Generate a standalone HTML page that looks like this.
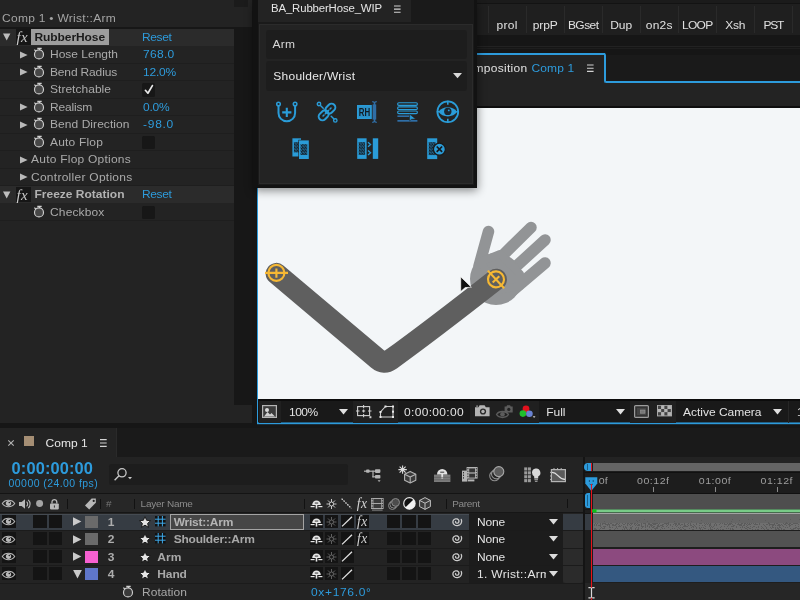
<!DOCTYPE html>
<html>
<head>
<meta charset="utf-8">
<title>After Effects - RubberHose</title>
<style>
*{box-sizing:border-box;margin:0;padding:0}
html,body{width:800px;height:600px;overflow:hidden;background:#161616;font-family:"Liberation Sans",sans-serif;font-size:12px;color:#a9a9a9}
.a{position:absolute}
.t{position:absolute;white-space:pre}
svg{position:absolute;overflow:visible}
#root{position:absolute;left:0;top:0;width:800px;height:600px;overflow:hidden;will-change:transform}
</style>
</head>
<body>
<div id="root">
<!-- ============ EFFECT CONTROLS ============ -->
<div class="a" style="left:0px;top:0px;width:252px;height:423px;background:#232323;"></div>
<div class="a" style="left:234px;top:0px;width:14px;height:7px;background:#1b1b1b;"></div>
<div class="t" style="left:2px;top:11.34px;font-size:12px;line-height:14px;height:14px;color:#a4a4a4;letter-spacing:0.281px;transform:scaleY(0.925);transform-origin:0 11.16px;">Comp 1 • Wrist::Arm</div>
<div class="a" style="left:0px;top:27px;width:252px;height:2px;background:#171717;"></div>
<div class="a" style="left:234px;top:29px;width:18px;height:376px;background:#171717;"></div>
<div class="a" style="left:0px;top:28.75px;width:234px;height:17px;background:#2b2b2b;"></div>
<svg style="left:3px;top:33.35px;" width="8" height="8" viewBox="0 0 8 8"><path d="M0 0.4h7.4L3.7 7.4z" fill="#bdbdbd"/></svg>
<div class="a" style="left:16px;top:29.25px;width:14.5px;height:15.5px;background:#161616;"></div>
<div class="t" style="left:16.5px;top:28.25px;font-size:15px;line-height:18px;height:18px;color:#c8c8c8;font-family:'Liberation Serif',serif;font-style:italic;letter-spacing:0.3px;">fx</div>
<div class="a" style="left:31px;top:29.15px;width:78px;height:15.6px;background:#9d9d9d;"></div>
<div class="t" style="left:34.5px;top:29.69px;font-size:12px;line-height:14px;height:14px;color:#1b1b1b;font-weight:700;letter-spacing:-0.084px;transform:scaleY(0.925);transform-origin:0 11.16px;">RubberHose</div>
<div class="t" style="left:142px;top:29.69px;font-size:12px;line-height:14px;height:14px;color:#2e9bdb;letter-spacing:-0.369px;transform:scaleY(0.925);transform-origin:0 11.16px;">Reset</div>
<div class="a" style="left:0px;top:62.85px;width:234px;height:1px;background:#1e1e1e;"></div>
<svg style="left:20px;top:50.85px;" width="8" height="8" viewBox="0 0 8 8"><path d="M0 0.6L7.6 4L0 7.4z" fill="#b9b9b9"/></svg>
<svg style="left:32.1px;top:46.45px;" width="14" height="16" viewBox="0 0 14 16"><circle cx="7" cy="8.4" r="4.5" fill="#484848" stroke="#cfcfcf" stroke-width="1.15"/><path d="M5.3 2.3h4.4M7.5 2.3v1.6M2.4 3.6l1.4 1.4" stroke="#cfcfcf" stroke-width="1.2" fill="none"/></svg>
<div class="t" style="left:50px;top:47.19px;font-size:12px;line-height:14px;height:14px;color:#aaaaaa;letter-spacing:-0.004px;transform:scaleY(0.925);transform-origin:0 11.16px;">Hose Length</div>
<div class="t" style="left:143px;top:47.19px;font-size:12px;line-height:14px;height:14px;color:#2e9bdb;letter-spacing:0.295px;transform:scaleY(0.925);transform-origin:0 11.16px;">768.0</div>
<div class="a" style="left:0px;top:80.35px;width:234px;height:1px;background:#1e1e1e;"></div>
<svg style="left:20px;top:68.35px;" width="8" height="8" viewBox="0 0 8 8"><path d="M0 0.6L7.6 4L0 7.4z" fill="#b9b9b9"/></svg>
<svg style="left:32.1px;top:63.94999999999999px;" width="14" height="16" viewBox="0 0 14 16"><circle cx="7" cy="8.4" r="4.5" fill="#484848" stroke="#cfcfcf" stroke-width="1.15"/><path d="M5.3 2.3h4.4M7.5 2.3v1.6M2.4 3.6l1.4 1.4" stroke="#cfcfcf" stroke-width="1.2" fill="none"/></svg>
<div class="t" style="left:50px;top:64.69px;font-size:12px;line-height:14px;height:14px;color:#aaaaaa;letter-spacing:-0.155px;transform:scaleY(0.925);transform-origin:0 11.16px;">Bend Radius</div>
<div class="t" style="left:143px;top:64.69px;font-size:12px;line-height:14px;height:14px;color:#2e9bdb;letter-spacing:-0.205px;transform:scaleY(0.925);transform-origin:0 11.16px;">12.0%</div>
<div class="a" style="left:0px;top:97.85px;width:234px;height:1px;background:#1e1e1e;"></div>
<svg style="left:32.1px;top:81.44999999999999px;" width="14" height="16" viewBox="0 0 14 16"><circle cx="7" cy="8.4" r="4.5" fill="#484848" stroke="#cfcfcf" stroke-width="1.15"/><path d="M5.3 2.3h4.4M7.5 2.3v1.6M2.4 3.6l1.4 1.4" stroke="#cfcfcf" stroke-width="1.2" fill="none"/></svg>
<div class="t" style="left:50px;top:82.19px;font-size:12px;line-height:14px;height:14px;color:#aaaaaa;letter-spacing:0.027px;transform:scaleY(0.925);transform-origin:0 11.16px;">Stretchable</div>
<div class="a" style="left:141.5px;top:83.25px;width:13.5px;height:13.5px;background:#171717;border-radius:1.5px"></div>
<svg style="left:141.5px;top:83.25px;" width="13.5" height="13.5" viewBox="0 0 13.5 13.5"><path d="M3.4 7.3L5.9 10.2L10.4 2.6" stroke="#e8e8e8" stroke-width="1.7" fill="none" stroke-linecap="round" stroke-linejoin="round"/></svg>
<div class="a" style="left:0px;top:115.35px;width:234px;height:1px;background:#1e1e1e;"></div>
<svg style="left:20px;top:103.35px;" width="8" height="8" viewBox="0 0 8 8"><path d="M0 0.6L7.6 4L0 7.4z" fill="#b9b9b9"/></svg>
<svg style="left:32.1px;top:98.94999999999999px;" width="14" height="16" viewBox="0 0 14 16"><circle cx="7" cy="8.4" r="4.5" fill="#484848" stroke="#cfcfcf" stroke-width="1.15"/><path d="M5.3 2.3h4.4M7.5 2.3v1.6M2.4 3.6l1.4 1.4" stroke="#cfcfcf" stroke-width="1.2" fill="none"/></svg>
<div class="t" style="left:50px;top:99.69px;font-size:12px;line-height:14px;height:14px;color:#aaaaaa;letter-spacing:-0.192px;transform:scaleY(0.925);transform-origin:0 11.16px;">Realism</div>
<div class="t" style="left:143px;top:99.69px;font-size:12px;line-height:14px;height:14px;color:#2e9bdb;letter-spacing:-0.213px;transform:scaleY(0.925);transform-origin:0 11.16px;">0.0%</div>
<div class="a" style="left:0px;top:132.85px;width:234px;height:1px;background:#1e1e1e;"></div>
<svg style="left:20px;top:120.85px;" width="8" height="8" viewBox="0 0 8 8"><path d="M0 0.6L7.6 4L0 7.4z" fill="#b9b9b9"/></svg>
<svg style="left:32.1px;top:116.44999999999999px;" width="14" height="16" viewBox="0 0 14 16"><circle cx="7" cy="8.4" r="4.5" fill="#484848" stroke="#cfcfcf" stroke-width="1.15"/><path d="M5.3 2.3h4.4M7.5 2.3v1.6M2.4 3.6l1.4 1.4" stroke="#cfcfcf" stroke-width="1.2" fill="none"/></svg>
<div class="t" style="left:50px;top:117.19px;font-size:12px;line-height:14px;height:14px;color:#aaaaaa;letter-spacing:0.057px;transform:scaleY(0.925);transform-origin:0 11.16px;">Bend Direction</div>
<div class="t" style="left:143px;top:117.19px;font-size:12px;line-height:14px;height:14px;color:#2e9bdb;letter-spacing:0.730px;transform:scaleY(0.925);transform-origin:0 11.16px;">-98.0</div>
<div class="a" style="left:0px;top:150.35px;width:234px;height:1px;background:#1e1e1e;"></div>
<svg style="left:32.1px;top:133.95px;" width="14" height="16" viewBox="0 0 14 16"><circle cx="7" cy="8.4" r="4.5" fill="#484848" stroke="#cfcfcf" stroke-width="1.15"/><path d="M5.3 2.3h4.4M7.5 2.3v1.6M2.4 3.6l1.4 1.4" stroke="#cfcfcf" stroke-width="1.2" fill="none"/></svg>
<div class="t" style="left:50px;top:134.69px;font-size:12px;line-height:14px;height:14px;color:#aaaaaa;letter-spacing:0.182px;transform:scaleY(0.925);transform-origin:0 11.16px;">Auto Flop</div>
<div class="a" style="left:141.5px;top:135.75px;width:13.5px;height:13.5px;background:#171717;border-radius:1.5px"></div>
<div class="a" style="left:0px;top:167.85px;width:234px;height:1px;background:#1e1e1e;"></div>
<svg style="left:20px;top:155.85px;" width="8" height="8" viewBox="0 0 8 8"><path d="M0 0.6L7.6 4L0 7.4z" fill="#b9b9b9"/></svg>
<div class="t" style="left:31px;top:152.19px;font-size:12px;line-height:14px;height:14px;color:#aaaaaa;letter-spacing:0.233px;transform:scaleY(0.925);transform-origin:0 11.16px;">Auto Flop Options</div>
<div class="a" style="left:0px;top:185.35px;width:234px;height:1px;background:#1e1e1e;"></div>
<svg style="left:20px;top:173.35px;" width="8" height="8" viewBox="0 0 8 8"><path d="M0 0.6L7.6 4L0 7.4z" fill="#b9b9b9"/></svg>
<div class="t" style="left:31px;top:169.69px;font-size:12px;line-height:14px;height:14px;color:#aaaaaa;letter-spacing:0.266px;transform:scaleY(0.925);transform-origin:0 11.16px;">Controller Options</div>
<div class="a" style="left:0px;top:186.25px;width:234px;height:17px;background:#2b2b2b;"></div>
<svg style="left:3px;top:190.85px;" width="8" height="8" viewBox="0 0 8 8"><path d="M0 0.4h7.4L3.7 7.4z" fill="#bdbdbd"/></svg>
<div class="a" style="left:16px;top:186.75px;width:14.5px;height:15.5px;background:#161616;"></div>
<div class="t" style="left:16.5px;top:185.75px;font-size:15px;line-height:18px;height:18px;color:#c8c8c8;font-family:'Liberation Serif',serif;font-style:italic;letter-spacing:0.3px;">fx</div>
<div class="t" style="left:34.5px;top:187.19px;font-size:12px;line-height:14px;height:14px;color:#b2b2b2;font-weight:700;letter-spacing:-0.000px;transform:scaleY(0.925);transform-origin:0 11.16px;">Freeze Rotation</div>
<div class="t" style="left:142px;top:187.19px;font-size:12px;line-height:14px;height:14px;color:#2e9bdb;letter-spacing:-0.369px;transform:scaleY(0.925);transform-origin:0 11.16px;">Reset</div>
<div class="a" style="left:0px;top:220.35px;width:234px;height:1px;background:#1e1e1e;"></div>
<svg style="left:32.1px;top:203.95px;" width="14" height="16" viewBox="0 0 14 16"><circle cx="7" cy="8.4" r="4.5" fill="#484848" stroke="#cfcfcf" stroke-width="1.15"/><path d="M5.3 2.3h4.4M7.5 2.3v1.6M2.4 3.6l1.4 1.4" stroke="#cfcfcf" stroke-width="1.2" fill="none"/></svg>
<div class="t" style="left:50px;top:204.69px;font-size:12px;line-height:14px;height:14px;color:#aaaaaa;letter-spacing:0.143px;transform:scaleY(0.925);transform-origin:0 11.16px;">Checkbox</div>
<div class="a" style="left:141.5px;top:205.75px;width:13.5px;height:13.5px;background:#171717;border-radius:1.5px"></div>
<!-- ============ VIEWER ============ -->
<div class="a" style="left:477px;top:55px;width:323px;height:52px;background:#232323;"></div>
<div class="a" style="left:477px;top:106px;width:323px;height:2px;background:#0e0e0e;"></div>
<div class="a" style="left:258px;top:108px;width:542px;height:291px;background:#f3f6f8;"></div>
<div class="a" style="left:257px;top:187.5px;width:1px;height:236px;background:#2d9bdc;"></div>
<svg style="left:0;top:0" width="800" height="600" viewBox="0 0 800 600"><g fill="none" stroke-linecap="round" stroke-linejoin="round"><g stroke="#929496" stroke-width="11.5"><path d="M488.5 231.5L479 266"/><path d="M531 227.5L502 256"/><path d="M545 240L510 272"/><path d="M545 263L512 291"/></g><circle cx="496" cy="279" r="26" fill="#929496"/><path d="M480 262 L500 254 L520 274 L520 286 L500 290 Z" fill="#929496" stroke="#929496" stroke-width="8"/><path d="M276.4 273.6L377.9 359.3Q384 364.5 390.5 359.8Q431 330.6 496.2 279.4" stroke="#5f5f5f" stroke-width="21.5"/></g><g fill="none" stroke="#f6b834" stroke-width="2.15"><circle cx="276.4" cy="272.9" r="8"/><path d="M265 272.9h23M276.4 268.6v9.2" /><g transform="rotate(47 496 279.4)"><circle cx="496" cy="279.4" r="8"/><path d="M484 279.4h24M496 274.9v9"/></g></g><path d="M460.7 276.8L460.7 291.6L465.2 287.6L471.4 287.2Z" fill="#111" stroke="#fff" stroke-width="0.7" stroke-linejoin="round"/></svg>
<div class="a" style="left:258.5px;top:399px;width:541.5px;height:23.5px;background:#191919;"></div>
<div class="a" style="left:258.5px;top:399px;width:541.5px;height:1.5px;background:#0c0c0c;"></div>
<svg style="left:257px;top:422px;" width="543" height="3" viewBox="0 0 543 3"><rect x="0" y="0.45" width="543" height="1.75" fill="#2d9bdc"/></svg>
<div class="a" style="left:258.5px;top:401px;width:22.5px;height:21.5px;background:#202020;"></div>
<div class="a" style="left:353px;top:401px;width:45px;height:21.5px;background:#202020;"></div>
<div class="a" style="left:470px;top:401px;width:69px;height:21.5px;background:#202020;"></div>
<div class="a" style="left:630px;top:401px;width:46px;height:21.5px;background:#202020;"></div>
<div class="a" style="left:788px;top:401px;width:1px;height:21.5px;background:#262626;"></div>
<svg style="left:262px;top:405px;" width="15" height="13" viewBox="0 0 15 13"><rect x="0.6" y="0.6" width="13.8" height="11.8" fill="#3b3b3b" stroke="#b5b5b5" stroke-width="1.2"/><circle cx="5" cy="5" r="2" fill="#d8d8d8"/><path d="M2 11.5L5.5 7L8 9.5L9.5 8L13 11.5z" fill="#cfcfcf"/></svg>
<div class="t" style="left:289px;top:405.24px;font-size:12px;line-height:14px;height:14px;color:#e2e2e2;letter-spacing:-0.548px;transform:scaleY(0.925);transform-origin:0 11.16px;">100%</div>
<svg style="left:338.5px;top:409.3px;" width="9" height="5.5" viewBox="0 0 9 5.5"><path d="M0 0h9L4.5 5.5z" fill="#e0e0e0"/></svg>
<svg style="left:356px;top:405px;" width="17" height="14" viewBox="0 0 17 14"><g fill="none" stroke="#d0d0d0" stroke-width="1.1"><rect x="1.6" y="1.6" width="12" height="9"/><path d="M0 6h3.5M12 6h3.5M7.6 0v3.3M7.6 9v3.3M6 6h3.2M7.6 4.6v2.8"/></g><rect x="13.4" y="11.2" width="2" height="2" fill="#d0d0d0"/></svg>
<svg style="left:379px;top:404.5px;" width="16" height="14" viewBox="0 0 16 14"><g fill="none" stroke="#d0d0d0" stroke-width="1.1"><path d="M1.5 12L1.5 7L6.5 1.5L14 1.5L14 12Z"/></g><g fill="#e8e8e8"><rect x="0.5" y="11" width="2" height="2"/><rect x="0.5" y="6" width="2" height="2"/><rect x="5.5" y="0.5" width="2" height="2"/><rect x="13" y="0.5" width="2" height="2"/><rect x="13" y="11" width="2" height="2"/><rect x="13" y="5.7" width="2" height="2"/></g></svg>
<div class="t" style="left:404px;top:405.24px;font-size:12px;line-height:14px;height:14px;color:#e2e2e2;letter-spacing:0.329px;transform:scaleY(0.925);transform-origin:0 11.16px;">0:00:00:00</div>
<svg style="left:474.5px;top:405.3px;" width="15" height="11.5" viewBox="0 0 15 11.5"><path d="M0 2.2h3.4l1.2-2h5l1.2 2H14.6v9H0z" fill="#b4b4b4"/><circle cx="8" cy="6.5" r="3.1" fill="#2a2a2a"/><circle cx="8" cy="6.5" r="1.7" fill="#b4b4b4"/><rect x="1.2" y="0.6" width="1.8" height="1" fill="#b4b4b4"/></svg>
<svg style="left:496px;top:403.5px;" width="18" height="16" viewBox="0 0 18 16"><path d="M0.5 10.5C3 6.5 10 6.5 12.5 10.5C10 14.5 3 14.5 0.5 10.5z" fill="none" stroke="#5c5c5c" stroke-width="1.3"/><circle cx="6.5" cy="10.3" r="2.3" fill="#5c5c5c"/><path d="M8.6 2.5h1.8l.7-1.2h3l.7 1.2h1.9v6h-8.1z" fill="#5c5c5c"/><circle cx="12.8" cy="5.4" r="1.6" fill="#222"/></svg>
<svg style="left:518px;top:404px;" width="20" height="16" viewBox="0 0 20 16"><circle cx="8" cy="4.8" r="3.4" fill="#e3111d"/><circle cx="4.9" cy="9.6" r="3.3" fill="#20bf2c"/><circle cx="11.4" cy="9.7" r="3.3" fill="#6a83d2"/><path d="M14.7 12.3h2.8l-1.4 1.7z" fill="#d0d0d0"/></svg>
<div class="t" style="left:546.3px;top:405.24px;font-size:12px;line-height:14px;height:14px;color:#e2e2e2;letter-spacing:-0.084px;transform:scaleY(0.925);transform-origin:0 11.16px;">Full</div>
<svg style="left:616px;top:409.3px;" width="9" height="5.5" viewBox="0 0 9 5.5"><path d="M0 0h9L4.5 5.5z" fill="#e0e0e0"/></svg>
<svg style="left:634px;top:405px;" width="15" height="13" viewBox="0 0 15 13"><rect x="0.6" y="0.6" width="13.8" height="11.8" rx="1" fill="#333" stroke="#9c9c9c" stroke-width="1.2"/><rect x="3" y="3" width="9" height="7" fill="#444"/><rect x="6.5" y="5" width="4.5" height="3.2" fill="#777" stroke="#999" stroke-width="0.6"/></svg>
<svg style="left:657px;top:405px;" width="15" height="11.5" viewBox="0 0 15 11.5"><rect x="0" y="0" width="15" height="11.4" fill="#a8a8a8"/><rect x="1.0" y="0.8" width="3.2" height="3.2" fill="#444"/><rect x="1.0" y="4.0" width="3.2" height="3.2" fill="#b5b5b5"/><rect x="1.0" y="7.2" width="3.2" height="3.2" fill="#444"/><rect x="4.2" y="0.8" width="3.2" height="3.2" fill="#b5b5b5"/><rect x="4.2" y="4.0" width="3.2" height="3.2" fill="#444"/><rect x="4.2" y="7.2" width="3.2" height="3.2" fill="#b5b5b5"/><rect x="7.4" y="0.8" width="3.2" height="3.2" fill="#444"/><rect x="7.4" y="4.0" width="3.2" height="3.2" fill="#b5b5b5"/><rect x="7.4" y="7.2" width="3.2" height="3.2" fill="#444"/><rect x="10.6" y="0.8" width="3.2" height="3.2" fill="#b5b5b5"/><rect x="10.6" y="4.0" width="3.2" height="3.2" fill="#444"/><rect x="10.6" y="7.2" width="3.2" height="3.2" fill="#b5b5b5"/></svg>
<div class="t" style="left:683px;top:405.24px;font-size:12px;line-height:14px;height:14px;color:#e2e2e2;letter-spacing:-0.014px;transform:scaleY(0.925);transform-origin:0 11.16px;">Active Camera</div>
<svg style="left:773px;top:409.3px;" width="9" height="5.5" viewBox="0 0 9 5.5"><path d="M0 0h9L4.5 5.5z" fill="#e0e0e0"/></svg>
<div class="t" style="left:797px;top:405.24px;font-size:12px;line-height:14px;height:14px;color:#e2e2e2;transform:scaleY(0.925);transform-origin:0 11.16px;">1</div>
<!-- ============ TOP RIGHT ============ -->
<div class="a" style="left:477px;top:0px;width:323px;height:4px;background:#1b1b1b;"></div>
<div class="a" style="left:477px;top:3px;width:323px;height:1px;background:#131313;"></div>
<div class="a" style="left:477px;top:4px;width:323px;height:30.5px;background:#1f1f1f;"></div>
<div class="a" style="left:487.5px;top:6px;width:1px;height:27px;background:#2a2a2a;"></div>
<div class="t" style="left:496.55px;top:17.64px;font-size:12px;line-height:14px;height:14px;color:#e0e0e0;letter-spacing:0.323px;transform:scaleY(0.925);transform-origin:0 11.16px;">prol</div>
<div class="a" style="left:525.5px;top:6px;width:1px;height:27px;background:#2a2a2a;"></div>
<div class="t" style="left:532.7px;top:17.64px;font-size:12px;line-height:14px;height:14px;color:#e0e0e0;letter-spacing:-0.087px;transform:scaleY(0.925);transform-origin:0 11.16px;">prpP</div>
<div class="a" style="left:563.5px;top:6px;width:1px;height:27px;background:#2a2a2a;"></div>
<div class="t" style="left:567.9000000000001px;top:17.64px;font-size:12px;line-height:14px;height:14px;color:#e0e0e0;letter-spacing:-0.549px;transform:scaleY(0.925);transform-origin:0 11.16px;">BGset</div>
<div class="a" style="left:601.5px;top:6px;width:1px;height:27px;background:#2a2a2a;"></div>
<div class="t" style="left:610.2px;top:17.64px;font-size:12px;line-height:14px;height:14px;color:#e0e0e0;letter-spacing:-0.004px;transform:scaleY(0.925);transform-origin:0 11.16px;">Dup</div>
<div class="a" style="left:639.5px;top:6px;width:1px;height:27px;background:#2a2a2a;"></div>
<div class="t" style="left:645.8000000000001px;top:17.64px;font-size:12px;line-height:14px;height:14px;color:#e0e0e0;letter-spacing:0.195px;transform:scaleY(0.925);transform-origin:0 11.16px;">on2s</div>
<div class="a" style="left:677.5px;top:6px;width:1px;height:27px;background:#2a2a2a;"></div>
<div class="t" style="left:681.95px;top:17.64px;font-size:12px;line-height:14px;height:14px;color:#e0e0e0;letter-spacing:-0.711px;transform:scaleY(0.925);transform-origin:0 11.16px;">LOOP</div>
<div class="a" style="left:715.5px;top:6px;width:1px;height:27px;background:#2a2a2a;"></div>
<div class="t" style="left:725.2px;top:17.64px;font-size:12px;line-height:14px;height:14px;color:#e0e0e0;letter-spacing:-0.226px;transform:scaleY(0.925);transform-origin:0 11.16px;">Xsh</div>
<div class="a" style="left:753.5px;top:6px;width:1px;height:27px;background:#2a2a2a;"></div>
<div class="t" style="left:763.4000000000001px;top:17.64px;font-size:12px;line-height:14px;height:14px;color:#e0e0e0;letter-spacing:-1.246px;transform:scaleY(0.925);transform-origin:0 11.16px;">PST</div>
<div class="a" style="left:791.5px;top:6px;width:1px;height:27px;background:#2a2a2a;"></div>
<div class="a" style="left:477px;top:34.5px;width:323px;height:18.5px;background:#161616;"></div>
<div class="a" style="left:477px;top:46px;width:323px;height:1px;background:#222;"></div>
<div class="a" style="left:477px;top:48px;width:323px;height:1px;background:#1e1e1e;"></div>
<div class="a" style="left:477px;top:53px;width:128px;height:2px;background:#2d9bdc;"></div>
<div class="a" style="left:605.5px;top:55px;width:194.5px;height:26px;background:#1a1a1a;"></div>
<div class="a" style="left:598px;top:53px;width:7.5px;height:8px;border-top:2px solid #2d9bdc;border-right:2px solid #2d9bdc;border-top-right-radius:2.5px"></div>
<div class="a" style="left:603.5px;top:60px;width:2px;height:21px;background:#2d9bdc;"></div>
<div class="a" style="left:603.5px;top:76px;width:8px;height:6.5px;border-bottom:2px solid #2d9bdc;border-left:2px solid #2d9bdc;border-bottom-left-radius:2.5px"></div>
<div class="a" style="left:610px;top:80.5px;width:190px;height:2px;background:#2d9bdc;"></div>
<div class="t" style="left:473.6px;top:61.24px;font-size:12px;line-height:14px;height:14px;color:#e0e0e0;letter-spacing:0.272px;transform:scaleY(0.925);transform-origin:0 11.16px;">mposition</div>
<div class="t" style="left:531.4px;top:61.24px;font-size:12px;line-height:14px;height:14px;color:#2d9bdc;letter-spacing:0.164px;transform:scaleY(0.925);transform-origin:0 11.16px;">Comp 1</div>
<svg style="left:587px;top:64.3px;" width="7" height="9" viewBox="0 0 7 9"><path d="M0 1h6.6M0 4.2h6.6M0 7.4h6.6" stroke="#d2d2d2" stroke-width="1.1"/></svg>
<!-- ============ BA PANEL ============ -->
<div class="a" style="left:253px;top:0px;width:223.5px;height:187px;background:#121212;box-shadow:0 3px 9px 0.5px rgba(0,0,0,0.46)"></div>
<div class="a" style="left:474px;top:0px;width:3.2px;height:187.5px;background:#121212;"></div>
<div class="a" style="left:258px;top:185px;width:219px;height:2.5px;background:#121212;"></div>
<div class="a" style="left:258px;top:0px;width:216px;height:24px;background:#1a1a1a;"></div>
<div class="a" style="left:258px;top:0px;width:152.5px;height:22px;background:#232323;"></div>
<div class="t" style="left:271px;top:1.05px;font-size:11.4px;line-height:14px;height:14px;color:#e4e4e4;letter-spacing:-0.142px;transform:scaleY(0.97);transform-origin:0 10.95px;">BA_RubberHose_WIP</div>
<svg style="left:394px;top:4.6px;" width="7" height="9" viewBox="0 0 7 9"><path d="M0 1h6.6M0 4.1h6.6M0 7.3h6.6" stroke="#d2d2d2" stroke-width="1.1"/></svg>
<div class="a" style="left:258px;top:22.5px;width:216px;height:162.5px;background:#232323;border:1px solid #1a1a1a;box-shadow:inset 0 0 0 1px #2b2b2b"></div>
<div class="a" style="left:266px;top:30px;width:201px;height:28.5px;background:#1d1d1d;border-radius:3px"></div>
<div class="a" style="left:266px;top:60.8px;width:201px;height:29.8px;background:#1d1d1d;border-radius:3px"></div>
<div class="t" style="left:272.5px;top:37.04px;font-size:12px;line-height:14px;height:14px;color:#d6d6d6;letter-spacing:0.235px;transform:scaleY(0.925);transform-origin:0 11.16px;">Arm</div>
<div class="t" style="left:273.3px;top:69.04px;font-size:12px;line-height:14px;height:14px;color:#e8e8e8;letter-spacing:0.252px;transform:scaleY(0.925);transform-origin:0 11.16px;">Shoulder/Wrist</div>
<svg style="left:453px;top:73px;" width="9" height="5.3" viewBox="0 0 9 5.3"><path d="M0 0h9L4.5 5.3z" fill="#d9d9d9"/></svg>
<svg style="left:276px;top:101px;" width="22" height="22" viewBox="0 0 22 22"><g fill="none" stroke="#2a9cd8" stroke-width="2"><path d="M2.5 4.8V12a8.3 8.3 0 0 0 16.6 0V4.8"/><circle cx="2.5" cy="3" r="1.8" fill="#232323" stroke-width="1.5"/><circle cx="19.1" cy="3" r="1.8" fill="#232323" stroke-width="1.5"/><path d="M6.2 11.4h9.2M10.8 6.8v9.2" stroke-width="2.1"/></g></svg>
<svg style="left:316px;top:101px;" width="22" height="22" viewBox="0 0 22 22"><g fill="none" stroke="#2a9cd8" stroke-width="2" stroke-linecap="round"><g transform="rotate(-45 11 11)"><rect x="0.8" y="7.2" width="11" height="7.6" rx="3.8"/><rect x="10.2" y="7.2" width="11" height="7.6" rx="3.8"/><path d="M5.4 11h11.4" stroke-dasharray="1.4 1.9" stroke-width="1.5"/></g><path d="M4.2 4.2l3 3M15.2 15.2l2.8 2.8" stroke-width="1.5"/><circle cx="3" cy="3" r="1.7" fill="#232323" stroke-width="1.4"/><circle cx="19.3" cy="19.4" r="1.7" fill="#232323" stroke-width="1.4"/></g></svg>
<svg style="left:357px;top:101px;" width="22" height="22" viewBox="0 0 22 22"><rect x="0" y="4" width="14.8" height="14" fill="#2a9cd8"/><rect x="1.5" y="5.5" width="11.8" height="11" fill="#2b8fc6"/><text x="7.4" y="15.4" font-family="Liberation Sans" font-weight="700" font-size="11.6" text-anchor="middle" fill="#121c24" textLength="11.4" lengthAdjust="spacingAndGlyphs">RH</text><path d="M15.2 0.6c1.4 0 2.1.5 2.1 1.4V20c0 .9-.7 1.4-2.1 1.4M19.8 0.6c-1.4 0-2.1.5-2.1 1.4V20c0 .9.7 1.4 2.1 1.4" fill="none" stroke="#2f6ea6" stroke-width="1.2"/><rect x="15.6" y="3.4" width="3.6" height="15.2" fill="#2f6ea6"/></svg>
<svg style="left:397px;top:102px;" width="22" height="21" viewBox="0 0 22 21"><g fill="none" stroke="#2a9cd8" stroke-width="1.1"><rect x="0.6" y="0.8" width="19.8" height="2.6" rx="1.3"/><rect x="0.6" y="4.9" width="19.8" height="2.6" rx="1.3"/><rect x="0.6" y="9" width="19.8" height="2.6" rx="1.3"/></g><rect x="0.4" y="13.4" width="12" height="1.6" fill="#2f6ea6"/><rect x="0.4" y="18" width="20" height="1.7" fill="#2f6ea6"/><path d="M12.6 12.2L12.6 19L14.6 17.2L18.6 17Z" fill="#2a9cd8" stroke="#232323" stroke-width="0.5"/></svg>
<svg style="left:436px;top:100px;" width="24" height="24" viewBox="0 0 24 24"><circle cx="11.8" cy="11.8" r="10.4" fill="none" stroke="#2a9cd8" stroke-width="1.8"/><path d="M11.8 0.8v4M11.8 18.8v4M0.8 11.8h2.6M20.2 11.8h2.6" stroke="#2a9cd8" stroke-width="1.6"/><path d="M2.6 11.8C6 5.6 17.6 5.6 21 11.8C17.6 18 6 18 2.6 11.8z" fill="#2a9cd8"/><circle cx="11.8" cy="11.4" r="3.7" fill="#1b2630"/><circle cx="12.8" cy="10.4" r="0.9" fill="#2a9cd8"/></svg>
<svg width="0" height="0" style="left:0;top:0"><defs><pattern id="hx" width="2.7" height="3.1" patternUnits="userSpaceOnUse"><rect width="2.7" height="3.1" fill="#2a8cc2"/><path d="M0 0L2.7 3.1M2.7 0L0 3.1" stroke="#14202a" stroke-width="0.95"/></pattern></defs></svg>
<svg style="left:291.6px;top:137.6px;" width="18" height="22" viewBox="0 0 18 22"><rect x="0.4" y="0.3" width="8.6" height="18.2" fill="#2a9cd8"/><rect x="1.9" y="4.1" width="5.6" height="10.399999999999999" fill="url(#hx)"/><rect x="6.4" y="1.8" width="10.6" height="19.6" fill="#232323"/><rect x="7" y="2.4" width="9.8" height="18.6" fill="#2a9cd8"/><rect x="8.5" y="6.199999999999999" width="6.800000000000001" height="10.8" fill="url(#hx)"/></svg>
<svg style="left:356.7px;top:137.6px;" width="23" height="22" viewBox="0 0 23 22"><rect x="0.2" y="0.3" width="9.4" height="20.6" fill="#2a9cd8"/><rect x="1.7" y="4.1" width="6.4" height="12.8" fill="url(#hx)"/><path d="M11 4.2l2.6 2.3l-2.6 2.3M11 12.4l2.6 2.3l-2.6 2.3" fill="none" stroke="#2a9cd8" stroke-width="1.3"/><rect x="15.8" y="0.3" width="5.4" height="20.6" fill="#2a9cd8"/></svg>
<svg style="left:426.6px;top:137.6px;" width="20" height="22" viewBox="0 0 20 22"><rect x="0.2" y="0.3" width="10" height="20.8" fill="#2a9cd8"/><rect x="1.7" y="4.1" width="7" height="13.0" fill="url(#hx)"/><circle cx="12.4" cy="11.2" r="6" fill="#2a9cd8" stroke="#1b1b1b" stroke-width="1.3"/><path d="M9.7 8.5l5.4 5.4M15.1 8.5l-5.4 5.4" stroke="#17191b" stroke-width="1.7"/></svg>
<!-- ============ TIMELINE ============ -->
<div class="a" style="left:0px;top:428px;width:800px;height:172px;background:#232323;"></div>
<div class="a" style="left:116.5px;top:428px;width:683.5px;height:29px;background:#1a1a1a;"></div>
<div class="a" style="left:116px;top:428px;width:1px;height:29px;background:#2a2a2a;"></div>
<svg style="left:8px;top:440px;" width="6" height="6" viewBox="0 0 6 6"><path d="M0.3 0.3L5.7 5.7M5.7 0.3L0.3 5.7" stroke="#b4b4b4" stroke-width="1.1"/></svg>
<div class="a" style="left:23.8px;top:436px;width:10.2px;height:10.2px;background:#a58e74;"></div>
<div class="t" style="left:45.6px;top:435.64px;font-size:12px;line-height:14px;height:14px;color:#e6e6e6;letter-spacing:-0.003px;transform:scaleY(0.925);transform-origin:0 11.16px;">Comp 1</div>
<svg style="left:99.8px;top:439.2px;" width="7" height="9" viewBox="0 0 7 9"><path d="M0 0.6h6.7M0 4h6.7M0 7.4h6.7" stroke="#d2d2d2" stroke-width="1.2"/></svg>
<div class="t" style="left:11.6px;top:458.22px;font-size:16.4px;line-height:20px;height:20px;color:#2d9bdc;font-weight:700;letter-spacing:0.128px;">0:00:00:00</div>
<div class="t" style="left:8.6px;top:477.16px;font-size:10.5px;line-height:13px;height:13px;color:#2d9bdc;letter-spacing:0.424px;transform:scaleY(0.97);transform-origin:0 10.14px;">00000 (24.00 fps)</div>
<div class="a" style="left:109px;top:464px;width:239px;height:21px;background:#1d1d1d;border-radius:2.5px"></div>
<svg style="left:113px;top:467px;" width="20" height="15" viewBox="0 0 20 15"><circle cx="9" cy="5.8" r="4.1" fill="none" stroke="#c8c8c8" stroke-width="1.3"/><path d="M6 8.8L1.6 13.2" stroke="#c8c8c8" stroke-width="1.4"/><path d="M15 10h4l-2 2.2z" fill="#c8c8c8"/></svg>
<svg style="left:364px;top:469px;" width="17" height="14" viewBox="0 0 17 14"><g fill="#b4b4b4"><rect x="0" y="1.6" width="7" height="1.2"/><rect x="2" y="0.4" width="3.6" height="3.4" rx="1"/><rect x="11" y="0.3" width="5.4" height="3.6" rx="0.8"/><rect x="11" y="6" width="5.4" height="3.6" rx="0.8"/><rect x="7" y="1.6" width="4" height="1.2"/><rect x="8.4" y="1.6" width="1.2" height="6.8"/><rect x="8.4" y="7.2" width="3" height="1.2"/><path d="M13.6 11.2h3l-1.5 1.8z"/></g></svg>
<svg style="left:398px;top:465px;" width="19" height="19" viewBox="0 0 19 19"><g stroke="#dcdcdc" stroke-width="1.1"><path d="M4.6 0.4v8.4M0.4 4.6h8.4M1.6 1.6l6 6M7.6 1.6l-6 6"/></g><g fill="#3a3a3a" stroke="#b4b4b4" stroke-width="1.1" stroke-linejoin="round"><path d="M12.2 6.4L17.8 9.2V15.2L12.2 18L6.6 15.2V9.2Z"/><path d="M6.6 9.2L12.2 12L17.8 9.2M12.2 12V18" fill="none"/></g></svg>
<svg style="left:434.4px;top:467px;" width="16.5" height="15.5" viewBox="0 0 16.5 15.5"><rect x="0" y="7.6" width="16.4" height="7.4" fill="#7c7c7c"/><path d="M3 7.4a5.2 5.4 0 0 1 10.4 0z" fill="#e2e2e2"/><rect x="7.3" y="5" width="1.8" height="6.5" fill="#e2e2e2"/><path d="M6.2 4.6h4v1.2h-4z" fill="#555"/><path d="M0 10.4h16.4M0 12.8h16.4" stroke="#5a5a5a" stroke-width="0.6"/></svg>
<svg style="left:462px;top:467px;" width="16" height="15" viewBox="0 0 16 15"><rect x="0" y="3.6" width="5.4" height="11" fill="#b4b4b4"/><rect x="4.6" y="0" width="11" height="11.6" fill="#b4b4b4"/><rect x="7.2" y="1.4" width="5.8" height="4" fill="#333"/><rect x="7.2" y="6.6" width="5.8" height="4" fill="#333"/><g fill="#333"><rect x="5.4" y="1" width="1" height="1.4"/><rect x="5.4" y="3.6" width="1" height="1.4"/><rect x="5.4" y="6.2" width="1" height="1.4"/><rect x="5.4" y="8.8" width="1" height="1.4"/><rect x="13.8" y="1" width="1" height="1.4"/><rect x="13.8" y="3.6" width="1" height="1.4"/><rect x="13.8" y="6.2" width="1" height="1.4"/><rect x="13.8" y="8.8" width="1" height="1.4"/><rect x="1" y="5" width="1" height="1.4"/><rect x="1" y="7.6" width="1" height="1.4"/><rect x="1" y="10.2" width="1" height="1.4"/></g><rect x="6" y="12.4" width="6.4" height="2" fill="#b4b4b4"/></svg>
<svg style="left:488.5px;top:466px;" width="16" height="15.5" viewBox="0 0 16 15.5"><g fill="none" stroke="#8f8f8f" stroke-width="1.1"><circle cx="5.6" cy="9.8" r="4.9"/><circle cx="7.4" cy="8" r="4.9"/></g><circle cx="9.8" cy="5.6" r="5" fill="#5c5c5c" stroke="#a8a8a8" stroke-width="1.1"/></svg>
<svg style="left:523.8px;top:467px;" width="17" height="16" viewBox="0 0 17 16"><rect x="0.2" y="0.4" width="3" height="3.1" fill="#9a9a9a"/><rect x="0.2" y="4.3" width="3" height="3.1" fill="#9a9a9a"/><rect x="0.2" y="8.2" width="3" height="3.1" fill="#9a9a9a"/><rect x="0.2" y="12.1" width="3" height="3.1" fill="#9a9a9a"/><rect x="3.9" y="0.4" width="3" height="3.1" fill="#9a9a9a"/><rect x="3.9" y="4.3" width="3" height="3.1" fill="#9a9a9a"/><rect x="3.9" y="8.2" width="3" height="3.1" fill="#9a9a9a"/><rect x="3.9" y="12.1" width="3" height="3.1" fill="#9a9a9a"/><rect x="7" y="3.6" width="10" height="12" fill="#232323"/><path d="M8 5.6a4.2 4.2 0 1 1 6.2 3.8v2.2h-4V9.4A4.2 4.2 0 0 1 8 5.6z" fill="#d8d8d8"/><rect x="10.4" y="12.2" width="3.6" height="1" fill="#b0b0b0"/><rect x="10.9" y="13.8" width="2.6" height="1" fill="#b0b0b0"/></svg>
<svg style="left:550px;top:467.5px;" width="16" height="14.5" viewBox="0 0 16 14.5"><rect x="1.4" y="1.6" width="14" height="12" fill="#5a5a5a" stroke="#b4b4b4" stroke-width="1.2"/><path d="M2 4.4C8 4.4 8 11.4 15 11.4" fill="none" stroke="#e0e0e0" stroke-width="1.2"/><path d="M4 0v1.6M7.6 0v1.6M11.2 0v1.6M0 4.4h1.4M0 8h1.4M0 11.4h1.4" stroke="#b4b4b4" stroke-width="1"/></svg>
<div class="a" style="left:0px;top:492.6px;width:583px;height:1.2px;background:#141414;"></div>
<div class="a" style="left:0px;top:493.8px;width:583px;height:18.2px;background:#272727;"></div>
<div class="a" style="left:0px;top:512px;width:583px;height:1.2px;background:#161616;"></div>
<svg style="left:2.2px;top:499.1px;" width="13" height="9" viewBox="0 0 13 9"><path d="M0.3 4.5C3 0.2 10 0.2 12.7 4.5C10 8.8 3 8.8 0.3 4.5z" fill="none" stroke="#b9b9b9" stroke-width="1.1"/><circle cx="6.5" cy="4.3" r="2.6" fill="#b9b9b9"/><circle cx="7.3" cy="3.5" r="0.8" fill="#222"/></svg>
<svg style="left:18.5px;top:498.6px;" width="12" height="10" viewBox="0 0 12 10"><path d="M0 3h2.6L6 0.2v9.6L2.6 7H0z" fill="#b8b8b8"/><path d="M7.6 2.6a3.2 3.2 0 0 1 0 4.8M9.2 0.8a5.6 5.6 0 0 1 0 8.4" fill="none" stroke="#b8b8b8" stroke-width="1.1"/></svg>
<svg style="left:35.8px;top:500.2px;" width="7.2" height="7.2" viewBox="0 0 7.2 7.2"><circle cx="3.6" cy="3.6" r="3.5" fill="#a4a4a4"/></svg>
<svg style="left:50px;top:498.6px;" width="9" height="10.5" viewBox="0 0 9 10.5"><rect x="0" y="4.4" width="8.8" height="6" rx="0.8" fill="#b8b8b8"/><path d="M2 4.6V3a2.4 2.4 0 0 1 4.8 0v1.6" fill="none" stroke="#b8b8b8" stroke-width="1.3"/><rect x="3.9" y="6.4" width="1" height="2.2" fill="#333"/></svg>
<div class="a" style="left:66.6px;top:499.2px;width:1.2px;height:9.4px;background:#121212;"></div>
<div class="a" style="left:99.8px;top:499.2px;width:1.2px;height:9.4px;background:#121212;"></div>
<div class="a" style="left:133.8px;top:499.2px;width:1.2px;height:9.4px;background:#121212;"></div>
<div class="a" style="left:304.2px;top:499.2px;width:1.2px;height:9.4px;background:#121212;"></div>
<div class="a" style="left:446px;top:499.2px;width:1.2px;height:9.4px;background:#121212;"></div>
<svg style="left:83.6px;top:497.6px;" width="13" height="12" viewBox="0 0 13 12"><path d="M1 8.2L7.6 1.4h4.2v4.2L5.2 12.2z" fill="#b8b8b8" transform="translate(0,-0.8)"/><circle cx="9.7" cy="2.9" r="1.1" fill="#222"/></svg>
<div class="t" style="left:106px;top:497.83px;font-size:10px;line-height:12px;height:12px;color:#777;transform:scaleY(0.97);transform-origin:0 9.47px;">#</div>
<div class="t" style="left:140.6px;top:497.83px;font-size:10px;line-height:12px;height:12px;color:#8c8c8c;letter-spacing:-0.246px;transform:scaleY(0.97);transform-origin:0 9.47px;">Layer Name</div>
<div class="t" style="left:452.2px;top:497.83px;font-size:10px;line-height:12px;height:12px;color:#8c8c8c;letter-spacing:-0.327px;transform:scaleY(0.97);transform-origin:0 9.47px;">Parent</div>
<svg style="left:310px;top:498.6px;" width="13" height="10.5" viewBox="0 0 13 10.5"><path d="M2.2 6a4.3 4.6 0 0 1 8.6 0z" fill="#e6e6e6"/><rect x="5.7" y="4" width="1.6" height="5.6" fill="#e6e6e6"/><rect x="0.6" y="7" width="4" height="1.2" fill="#e6e6e6"/><rect x="8.4" y="7" width="4" height="1.2" fill="#e6e6e6"/><rect x="4.8" y="3.6" width="3.4" height="0.9" fill="#222"/></svg>
<svg style="left:326.2px;top:498.6px;" width="11" height="10" viewBox="0 0 11 10"><g stroke="#d8d8d8" stroke-width="0.9"><path d="M5.5 0v10M0.5 5h10M2 1.5l7 7M9 1.5l-7 7"/></g><circle cx="5.5" cy="5" r="2" fill="#161616" stroke="#d8d8d8" stroke-width="0.9"/></svg>
<svg style="left:341.2px;top:498px;" width="11" height="11" viewBox="0 0 11 11"><path d="M0.6 0.6L10.4 10.4" stroke="#dcdcdc" stroke-width="1.3" stroke-dasharray="1.6 1.1"/></svg>
<div class="t" style="left:356.79999999999995px;top:495.89px;font-size:13.6px;line-height:16px;height:16px;color:#d4d4d4;font-family:'Liberation Serif',serif;font-style:italic;letter-spacing:0.4px;">fx</div>
<svg style="left:371.4px;top:497.6px;" width="12.6" height="12.6" viewBox="0 0 12.6 12.6"><rect x="0" y="0" width="12.6" height="11" fill="#aaa"/><rect x="2.4" y="1" width="7.8" height="4" fill="#3a3a3a"/><rect x="2.4" y="6" width="7.8" height="4" fill="#3a3a3a"/><rect x="0.7" y="0.8" width="1" height="1.4" fill="#333"/><rect x="0.7" y="3.4" width="1" height="1.4" fill="#333"/><rect x="0.7" y="6.0" width="1" height="1.4" fill="#333"/><rect x="0.7" y="8.6" width="1" height="1.4" fill="#333"/><rect x="10.9" y="0.8" width="1" height="1.4" fill="#333"/><rect x="10.9" y="3.4" width="1" height="1.4" fill="#333"/><rect x="10.9" y="6.0" width="1" height="1.4" fill="#333"/><rect x="10.9" y="8.6" width="1" height="1.4" fill="#333"/><rect x="1" y="11.6" width="10.6" height="1" fill="#888"/></svg>
<svg style="left:388px;top:497.6px;" width="12" height="12" viewBox="0 0 12 12"><g fill="none" stroke="#8a8a8a" stroke-width="1"><circle cx="4.4" cy="7.6" r="3.9"/><circle cx="5.8" cy="6.2" r="3.9"/></g><circle cx="7.6" cy="4.4" r="3.9" fill="#4c4c4c" stroke="#8a8a8a" stroke-width="1"/></svg>
<svg style="left:402.6px;top:497.2px;" width="13" height="13" viewBox="0 0 13 13"><circle cx="6.4" cy="6.4" r="5.7" fill="#111" stroke="#e6e6e6" stroke-width="1.2"/><path d="M10.5 2.4A5.7 5.7 0 0 1 2.3 10.5z" fill="#f2f2f2"/></svg>
<svg style="left:419px;top:497.2px;" width="12" height="13" viewBox="0 0 12 13"><g fill="#3c3c3c" stroke="#c0c0c0" stroke-width="1" stroke-linejoin="round"><path d="M6 0.6L11.4 3.4V9.6L6 12.4L0.6 9.6V3.4Z"/><path d="M0.6 3.4L6 6.2L11.4 3.4M6 6.2V12.4" fill="none"/></g></svg>
<div class="a" style="left:0px;top:514.00px;width:583px;height:16.2px;background:#363c43;"></div>
<div class="a" style="left:0px;top:514.00px;width:583px;height:1px;background:#454b52;"></div>
<div class="a" style="left:0px;top:530.10px;width:583px;height:1px;background:#1b1b1b;"></div>
<div class="a" style="left:2px;top:514.90px;width:13.6px;height:12.8px;background:#141414;"></div>
<svg style="left:2.4px;top:517.0px;" width="13" height="9" viewBox="0 0 13 9"><path d="M0.3 4.5C3 0.2 10 0.2 12.7 4.5C10 8.8 3 8.8 0.3 4.5z" fill="none" stroke="#b9b9b9" stroke-width="1.1"/><circle cx="6.5" cy="4.3" r="2.6" fill="#b9b9b9"/><circle cx="7.3" cy="3.5" r="0.8" fill="#222"/></svg>
<div class="a" style="left:33px;top:514.90px;width:13.6px;height:12.8px;background:#141414;"></div>
<div class="a" style="left:48.5px;top:514.90px;width:13.6px;height:12.8px;background:#141414;"></div>
<svg style="left:73px;top:517.3000000000001px;" width="8.6" height="9" viewBox="0 0 8.6 9"><path d="M0 0.2L8.4 4.5L0 8.8z" fill="#cacaca"/></svg>
<div class="a" style="left:85.4px;top:515.50px;width:12.6px;height:12px;background:#6a6a6a;"></div>
<div class="t" style="left:107.8px;top:514.54px;font-size:12px;line-height:14px;height:14px;color:#adadad;font-weight:700;transform:scaleY(0.925);transform-origin:0 11.16px;">1</div>
<svg style="left:138.6px;top:515.7px;" width="12" height="12" viewBox="0 0 12 12"><path d="M6 0.6L7.6 4.3L11.6 4.7L8.6 7.4L9.5 11.3L6 9.2L2.5 11.3L3.4 7.4L0.4 4.7L4.4 4.3Z" fill="#e4e4e4" stroke="#111" stroke-width="0.9" stroke-linejoin="round"/></svg>
<svg style="left:155px;top:515.9000000000001px;" width="10.6" height="10.4" viewBox="0 0 10.6 10.4"><rect x="0" y="0" width="10.6" height="10.4" fill="#111"/><path d="M3.2 0v10.4M7.4 0v10.4M0 3.2h10.6M0 7.2h10.6" stroke="#3eaaea" stroke-width="1"/></svg>
<div class="a" style="left:170.4px;top:514.10px;width:133.8px;height:15.6px;background:#464646;border:1.4px solid #a4a4a4"></div>
<div class="t" style="left:173.7px;top:514.54px;font-size:12px;line-height:14px;height:14px;color:#b4b4b4;font-weight:700;letter-spacing:-0.228px;transform:scaleY(0.925);transform-origin:0 11.16px;">Wrist::Arm</div>
<div class="a" style="left:310px;top:514.90px;width:13.2px;height:12.8px;background:#141414;"></div>
<div class="a" style="left:325.3px;top:514.90px;width:13.2px;height:12.8px;background:#141414;"></div>
<div class="a" style="left:340.6px;top:514.90px;width:13.2px;height:12.8px;background:#141414;"></div>
<div class="a" style="left:356px;top:514.90px;width:13.2px;height:12.8px;background:#141414;"></div>
<svg style="left:310.1px;top:516.7px;" width="13" height="10.5" viewBox="0 0 13 10.5"><path d="M2.2 6a4.3 4.6 0 0 1 8.6 0z" fill="#e6e6e6"/><rect x="5.7" y="4" width="1.6" height="5.6" fill="#e6e6e6"/><rect x="0.6" y="7" width="4" height="1.2" fill="#e6e6e6"/><rect x="8.4" y="7" width="4" height="1.2" fill="#e6e6e6"/><rect x="4.8" y="3.6" width="3.4" height="0.9" fill="#222"/></svg>
<svg style="left:326.4px;top:516.7px;" width="11" height="10" viewBox="0 0 11 10"><g stroke="#686868" stroke-width="0.9"><path d="M5.5 0v10M0.5 5h10M2 1.5l7 7M9 1.5l-7 7"/></g><circle cx="5.5" cy="5" r="2" fill="#161616" stroke="#686868" stroke-width="0.9"/></svg>
<svg style="left:341.2px;top:516.2px;" width="12" height="11" viewBox="0 0 12 11"><path d="M1 10.4L11 0.8" stroke="#e2e2e2" stroke-width="1.3"/></svg>
<div class="t" style="left:357.0px;top:513.99px;font-size:13.6px;line-height:16px;height:16px;color:#d4d4d4;font-family:'Liberation Serif',serif;font-style:italic;letter-spacing:0.4px;">fx</div>
<div class="a" style="left:387px;top:514.90px;width:13.4px;height:12.8px;background:#141414;"></div>
<div class="a" style="left:402.3px;top:514.90px;width:13.4px;height:12.8px;background:#141414;"></div>
<div class="a" style="left:417.8px;top:514.90px;width:13.4px;height:12.8px;background:#141414;"></div>
<svg style="left:451.2px;top:515.5px;" width="11.4" height="11.4" viewBox="0 0 11.4 11.4"><path d="M4.68 5.46L4.59 5.61L4.54 5.78L4.52 5.96L4.54 6.15L4.60 6.35L4.70 6.54L4.84 6.72L5.03 6.89L5.26 7.02L5.51 7.12L5.80 7.18L6.10 7.19L6.41 7.15L6.72 7.05L7.02 6.91L7.29 6.71L7.53 6.46L7.73 6.17L7.87 5.84L7.95 5.49L7.97 5.11L7.91 4.73L7.78 4.35L7.58 3.99L7.31 3.65L6.97 3.36L6.57 3.12L6.12 2.94L5.63 2.83L5.12 2.80L4.60 2.85L4.08 2.99L3.59 3.21L3.13 3.51L2.73 3.88L2.39 4.32L2.14 4.81L1.97 5.35L1.91 5.92L1.95 6.50L2.10 7.08L2.36 7.63L2.72 8.15L3.18 8.61L3.72 9.00L4.34 9.30L5.02 9.51L5.74 9.61L6.47 9.60L7.21 9.47L7.92 9.22L8.59 8.87L9.19 8.40L9.71 7.84L10.12 7.20L10.42 6.50L10.58 5.74L10.61 4.97L10.49 4.18L10.23 3.42" fill="none" stroke="#cdcdcd" stroke-width="1.25" stroke-linecap="round" stroke-linejoin="round"/></svg>
<div class="a" style="left:469.4px;top:513.40px;width:93.8px;height:16.7px;background:#1c1c1c;"></div>
<div class="t" style="left:477px;top:514.54px;font-size:12px;line-height:14px;height:14px;color:#e4e4e4;letter-spacing:-0.171px;transform:scaleY(0.925);transform-origin:0 11.16px;">None</div>
<svg style="left:549px;top:518.7px;" width="9" height="5.4" viewBox="0 0 9 5.4"><path d="M0 0h9L4.5 5.4z" fill="#dcdcdc"/></svg>
<div class="a" style="left:0px;top:547.60px;width:583px;height:1px;background:#1b1b1b;"></div>
<div class="a" style="left:2px;top:532.40px;width:13.6px;height:12.8px;background:#141414;"></div>
<svg style="left:2.4px;top:534.5px;" width="13" height="9" viewBox="0 0 13 9"><path d="M0.3 4.5C3 0.2 10 0.2 12.7 4.5C10 8.8 3 8.8 0.3 4.5z" fill="none" stroke="#b9b9b9" stroke-width="1.1"/><circle cx="6.5" cy="4.3" r="2.6" fill="#b9b9b9"/><circle cx="7.3" cy="3.5" r="0.8" fill="#222"/></svg>
<div class="a" style="left:33px;top:532.40px;width:13.6px;height:12.8px;background:#141414;"></div>
<div class="a" style="left:48.5px;top:532.40px;width:13.6px;height:12.8px;background:#141414;"></div>
<svg style="left:73px;top:534.8000000000001px;" width="8.6" height="9" viewBox="0 0 8.6 9"><path d="M0 0.2L8.4 4.5L0 8.8z" fill="#cacaca"/></svg>
<div class="a" style="left:85.4px;top:533.00px;width:12.6px;height:12px;background:#6a6a6a;"></div>
<div class="t" style="left:107.8px;top:532.04px;font-size:12px;line-height:14px;height:14px;color:#adadad;font-weight:700;transform:scaleY(0.925);transform-origin:0 11.16px;">2</div>
<svg style="left:138.6px;top:533.2px;" width="12" height="12" viewBox="0 0 12 12"><path d="M6 0.6L7.6 4.3L11.6 4.7L8.6 7.4L9.5 11.3L6 9.2L2.5 11.3L3.4 7.4L0.4 4.7L4.4 4.3Z" fill="#e4e4e4" stroke="#111" stroke-width="0.9" stroke-linejoin="round"/></svg>
<svg style="left:155px;top:533.4000000000001px;" width="10.6" height="10.4" viewBox="0 0 10.6 10.4"><rect x="0" y="0" width="10.6" height="10.4" fill="#111"/><path d="M3.2 0v10.4M7.4 0v10.4M0 3.2h10.6M0 7.2h10.6" stroke="#3eaaea" stroke-width="1"/></svg>
<div class="t" style="left:173.7px;top:532.04px;font-size:12px;line-height:14px;height:14px;color:#a8a8a8;font-weight:700;letter-spacing:-0.231px;transform:scaleY(0.925);transform-origin:0 11.16px;">Shoulder::Arm</div>
<div class="a" style="left:310px;top:532.40px;width:13.2px;height:12.8px;background:#141414;"></div>
<div class="a" style="left:325.3px;top:532.40px;width:13.2px;height:12.8px;background:#141414;"></div>
<div class="a" style="left:340.6px;top:532.40px;width:13.2px;height:12.8px;background:#141414;"></div>
<div class="a" style="left:356px;top:532.40px;width:13.2px;height:12.8px;background:#141414;"></div>
<svg style="left:310.1px;top:534.2px;" width="13" height="10.5" viewBox="0 0 13 10.5"><path d="M2.2 6a4.3 4.6 0 0 1 8.6 0z" fill="#e6e6e6"/><rect x="5.7" y="4" width="1.6" height="5.6" fill="#e6e6e6"/><rect x="0.6" y="7" width="4" height="1.2" fill="#e6e6e6"/><rect x="8.4" y="7" width="4" height="1.2" fill="#e6e6e6"/><rect x="4.8" y="3.6" width="3.4" height="0.9" fill="#222"/></svg>
<svg style="left:326.4px;top:534.2px;" width="11" height="10" viewBox="0 0 11 10"><g stroke="#686868" stroke-width="0.9"><path d="M5.5 0v10M0.5 5h10M2 1.5l7 7M9 1.5l-7 7"/></g><circle cx="5.5" cy="5" r="2" fill="#161616" stroke="#686868" stroke-width="0.9"/></svg>
<svg style="left:341.2px;top:533.7px;" width="12" height="11" viewBox="0 0 12 11"><path d="M1 10.4L11 0.8" stroke="#e2e2e2" stroke-width="1.3"/></svg>
<div class="t" style="left:357.0px;top:531.49px;font-size:13.6px;line-height:16px;height:16px;color:#d4d4d4;font-family:'Liberation Serif',serif;font-style:italic;letter-spacing:0.4px;">fx</div>
<div class="a" style="left:387px;top:532.40px;width:13.4px;height:12.8px;background:#141414;"></div>
<div class="a" style="left:402.3px;top:532.40px;width:13.4px;height:12.8px;background:#141414;"></div>
<div class="a" style="left:417.8px;top:532.40px;width:13.4px;height:12.8px;background:#141414;"></div>
<svg style="left:451.2px;top:533.0px;" width="11.4" height="11.4" viewBox="0 0 11.4 11.4"><path d="M4.68 5.46L4.59 5.61L4.54 5.78L4.52 5.96L4.54 6.15L4.60 6.35L4.70 6.54L4.84 6.72L5.03 6.89L5.26 7.02L5.51 7.12L5.80 7.18L6.10 7.19L6.41 7.15L6.72 7.05L7.02 6.91L7.29 6.71L7.53 6.46L7.73 6.17L7.87 5.84L7.95 5.49L7.97 5.11L7.91 4.73L7.78 4.35L7.58 3.99L7.31 3.65L6.97 3.36L6.57 3.12L6.12 2.94L5.63 2.83L5.12 2.80L4.60 2.85L4.08 2.99L3.59 3.21L3.13 3.51L2.73 3.88L2.39 4.32L2.14 4.81L1.97 5.35L1.91 5.92L1.95 6.50L2.10 7.08L2.36 7.63L2.72 8.15L3.18 8.61L3.72 9.00L4.34 9.30L5.02 9.51L5.74 9.61L6.47 9.60L7.21 9.47L7.92 9.22L8.59 8.87L9.19 8.40L9.71 7.84L10.12 7.20L10.42 6.50L10.58 5.74L10.61 4.97L10.49 4.18L10.23 3.42" fill="none" stroke="#cdcdcd" stroke-width="1.25" stroke-linecap="round" stroke-linejoin="round"/></svg>
<div class="a" style="left:469.4px;top:530.90px;width:93.8px;height:16.7px;background:#1c1c1c;"></div>
<div class="t" style="left:477px;top:532.04px;font-size:12px;line-height:14px;height:14px;color:#e4e4e4;letter-spacing:-0.171px;transform:scaleY(0.925);transform-origin:0 11.16px;">None</div>
<svg style="left:549px;top:536.2px;" width="9" height="5.4" viewBox="0 0 9 5.4"><path d="M0 0h9L4.5 5.4z" fill="#dcdcdc"/></svg>
<div class="a" style="left:0px;top:565.10px;width:583px;height:1px;background:#1b1b1b;"></div>
<div class="a" style="left:2px;top:549.90px;width:13.6px;height:12.8px;background:#141414;"></div>
<svg style="left:2.4px;top:552.0px;" width="13" height="9" viewBox="0 0 13 9"><path d="M0.3 4.5C3 0.2 10 0.2 12.7 4.5C10 8.8 3 8.8 0.3 4.5z" fill="none" stroke="#b9b9b9" stroke-width="1.1"/><circle cx="6.5" cy="4.3" r="2.6" fill="#b9b9b9"/><circle cx="7.3" cy="3.5" r="0.8" fill="#222"/></svg>
<div class="a" style="left:33px;top:549.90px;width:13.6px;height:12.8px;background:#141414;"></div>
<div class="a" style="left:48.5px;top:549.90px;width:13.6px;height:12.8px;background:#141414;"></div>
<svg style="left:73px;top:552.3000000000001px;" width="8.6" height="9" viewBox="0 0 8.6 9"><path d="M0 0.2L8.4 4.5L0 8.8z" fill="#cacaca"/></svg>
<div class="a" style="left:85.4px;top:550.50px;width:12.6px;height:12px;background:#f660d1;"></div>
<div class="t" style="left:107.8px;top:549.54px;font-size:12px;line-height:14px;height:14px;color:#adadad;font-weight:700;transform:scaleY(0.925);transform-origin:0 11.16px;">3</div>
<svg style="left:138.6px;top:550.7px;" width="12" height="12" viewBox="0 0 12 12"><path d="M6 0.6L7.6 4.3L11.6 4.7L8.6 7.4L9.5 11.3L6 9.2L2.5 11.3L3.4 7.4L0.4 4.7L4.4 4.3Z" fill="#e4e4e4" stroke="#111" stroke-width="0.9" stroke-linejoin="round"/></svg>
<div class="t" style="left:157.3px;top:549.54px;font-size:12px;line-height:14px;height:14px;color:#a8a8a8;font-weight:700;letter-spacing:-0.003px;transform:scaleY(0.925);transform-origin:0 11.16px;">Arm</div>
<div class="a" style="left:310px;top:549.90px;width:13.2px;height:12.8px;background:#141414;"></div>
<div class="a" style="left:325.3px;top:549.90px;width:13.2px;height:12.8px;background:#141414;"></div>
<div class="a" style="left:340.6px;top:549.90px;width:13.2px;height:12.8px;background:#141414;"></div>
<svg style="left:310.1px;top:551.7px;" width="13" height="10.5" viewBox="0 0 13 10.5"><path d="M2.2 6a4.3 4.6 0 0 1 8.6 0z" fill="#e6e6e6"/><rect x="5.7" y="4" width="1.6" height="5.6" fill="#e6e6e6"/><rect x="0.6" y="7" width="4" height="1.2" fill="#e6e6e6"/><rect x="8.4" y="7" width="4" height="1.2" fill="#e6e6e6"/><rect x="4.8" y="3.6" width="3.4" height="0.9" fill="#222"/></svg>
<svg style="left:326.4px;top:551.7px;" width="11" height="10" viewBox="0 0 11 10"><g stroke="#686868" stroke-width="0.9"><path d="M5.5 0v10M0.5 5h10M2 1.5l7 7M9 1.5l-7 7"/></g><circle cx="5.5" cy="5" r="2" fill="#161616" stroke="#686868" stroke-width="0.9"/></svg>
<svg style="left:341.2px;top:551.2px;" width="12" height="11" viewBox="0 0 12 11"><path d="M1 10.4L11 0.8" stroke="#e2e2e2" stroke-width="1.3"/></svg>
<div class="a" style="left:387px;top:549.90px;width:13.4px;height:12.8px;background:#141414;"></div>
<div class="a" style="left:402.3px;top:549.90px;width:13.4px;height:12.8px;background:#141414;"></div>
<div class="a" style="left:417.8px;top:549.90px;width:13.4px;height:12.8px;background:#141414;"></div>
<svg style="left:451.2px;top:550.5px;" width="11.4" height="11.4" viewBox="0 0 11.4 11.4"><path d="M4.68 5.46L4.59 5.61L4.54 5.78L4.52 5.96L4.54 6.15L4.60 6.35L4.70 6.54L4.84 6.72L5.03 6.89L5.26 7.02L5.51 7.12L5.80 7.18L6.10 7.19L6.41 7.15L6.72 7.05L7.02 6.91L7.29 6.71L7.53 6.46L7.73 6.17L7.87 5.84L7.95 5.49L7.97 5.11L7.91 4.73L7.78 4.35L7.58 3.99L7.31 3.65L6.97 3.36L6.57 3.12L6.12 2.94L5.63 2.83L5.12 2.80L4.60 2.85L4.08 2.99L3.59 3.21L3.13 3.51L2.73 3.88L2.39 4.32L2.14 4.81L1.97 5.35L1.91 5.92L1.95 6.50L2.10 7.08L2.36 7.63L2.72 8.15L3.18 8.61L3.72 9.00L4.34 9.30L5.02 9.51L5.74 9.61L6.47 9.60L7.21 9.47L7.92 9.22L8.59 8.87L9.19 8.40L9.71 7.84L10.12 7.20L10.42 6.50L10.58 5.74L10.61 4.97L10.49 4.18L10.23 3.42" fill="none" stroke="#cdcdcd" stroke-width="1.25" stroke-linecap="round" stroke-linejoin="round"/></svg>
<div class="a" style="left:469.4px;top:548.40px;width:93.8px;height:16.7px;background:#1c1c1c;"></div>
<div class="t" style="left:477px;top:549.54px;font-size:12px;line-height:14px;height:14px;color:#e4e4e4;letter-spacing:-0.171px;transform:scaleY(0.925);transform-origin:0 11.16px;">None</div>
<svg style="left:549px;top:553.7px;" width="9" height="5.4" viewBox="0 0 9 5.4"><path d="M0 0h9L4.5 5.4z" fill="#dcdcdc"/></svg>
<div class="a" style="left:0px;top:582.60px;width:583px;height:1px;background:#1b1b1b;"></div>
<div class="a" style="left:2px;top:567.40px;width:13.6px;height:12.8px;background:#141414;"></div>
<svg style="left:2.4px;top:569.5px;" width="13" height="9" viewBox="0 0 13 9"><path d="M0.3 4.5C3 0.2 10 0.2 12.7 4.5C10 8.8 3 8.8 0.3 4.5z" fill="none" stroke="#b9b9b9" stroke-width="1.1"/><circle cx="6.5" cy="4.3" r="2.6" fill="#b9b9b9"/><circle cx="7.3" cy="3.5" r="0.8" fill="#222"/></svg>
<div class="a" style="left:33px;top:567.40px;width:13.6px;height:12.8px;background:#141414;"></div>
<div class="a" style="left:48.5px;top:567.40px;width:13.6px;height:12.8px;background:#141414;"></div>
<svg style="left:72.6px;top:570.2px;" width="9" height="8.6" viewBox="0 0 9 8.6"><path d="M0.1 0h8.8L4.5 8.4z" fill="#cacaca"/></svg>
<div class="a" style="left:85.4px;top:568.00px;width:12.6px;height:12px;background:#5f76c9;"></div>
<div class="t" style="left:107.8px;top:567.04px;font-size:12px;line-height:14px;height:14px;color:#adadad;font-weight:700;transform:scaleY(0.925);transform-origin:0 11.16px;">4</div>
<svg style="left:138.6px;top:568.2px;" width="12" height="12" viewBox="0 0 12 12"><path d="M6 0.6L7.6 4.3L11.6 4.7L8.6 7.4L9.5 11.3L6 9.2L2.5 11.3L3.4 7.4L0.4 4.7L4.4 4.3Z" fill="#e4e4e4" stroke="#111" stroke-width="0.9" stroke-linejoin="round"/></svg>
<div class="t" style="left:157.3px;top:567.04px;font-size:12px;line-height:14px;height:14px;color:#a8a8a8;font-weight:700;letter-spacing:-0.125px;transform:scaleY(0.925);transform-origin:0 11.16px;">Hand</div>
<div class="a" style="left:310px;top:567.40px;width:13.2px;height:12.8px;background:#141414;"></div>
<div class="a" style="left:325.3px;top:567.40px;width:13.2px;height:12.8px;background:#141414;"></div>
<div class="a" style="left:340.6px;top:567.40px;width:13.2px;height:12.8px;background:#141414;"></div>
<svg style="left:310.1px;top:569.2px;" width="13" height="10.5" viewBox="0 0 13 10.5"><path d="M2.2 6a4.3 4.6 0 0 1 8.6 0z" fill="#e6e6e6"/><rect x="5.7" y="4" width="1.6" height="5.6" fill="#e6e6e6"/><rect x="0.6" y="7" width="4" height="1.2" fill="#e6e6e6"/><rect x="8.4" y="7" width="4" height="1.2" fill="#e6e6e6"/><rect x="4.8" y="3.6" width="3.4" height="0.9" fill="#222"/></svg>
<svg style="left:326.4px;top:569.2px;" width="11" height="10" viewBox="0 0 11 10"><g stroke="#686868" stroke-width="0.9"><path d="M5.5 0v10M0.5 5h10M2 1.5l7 7M9 1.5l-7 7"/></g><circle cx="5.5" cy="5" r="2" fill="#161616" stroke="#686868" stroke-width="0.9"/></svg>
<svg style="left:341.2px;top:568.7px;" width="12" height="11" viewBox="0 0 12 11"><path d="M1 10.4L11 0.8" stroke="#e2e2e2" stroke-width="1.3"/></svg>
<div class="a" style="left:387px;top:567.40px;width:13.4px;height:12.8px;background:#141414;"></div>
<div class="a" style="left:402.3px;top:567.40px;width:13.4px;height:12.8px;background:#141414;"></div>
<div class="a" style="left:417.8px;top:567.40px;width:13.4px;height:12.8px;background:#141414;"></div>
<svg style="left:451.2px;top:568.0px;" width="11.4" height="11.4" viewBox="0 0 11.4 11.4"><path d="M4.68 5.46L4.59 5.61L4.54 5.78L4.52 5.96L4.54 6.15L4.60 6.35L4.70 6.54L4.84 6.72L5.03 6.89L5.26 7.02L5.51 7.12L5.80 7.18L6.10 7.19L6.41 7.15L6.72 7.05L7.02 6.91L7.29 6.71L7.53 6.46L7.73 6.17L7.87 5.84L7.95 5.49L7.97 5.11L7.91 4.73L7.78 4.35L7.58 3.99L7.31 3.65L6.97 3.36L6.57 3.12L6.12 2.94L5.63 2.83L5.12 2.80L4.60 2.85L4.08 2.99L3.59 3.21L3.13 3.51L2.73 3.88L2.39 4.32L2.14 4.81L1.97 5.35L1.91 5.92L1.95 6.50L2.10 7.08L2.36 7.63L2.72 8.15L3.18 8.61L3.72 9.00L4.34 9.30L5.02 9.51L5.74 9.61L6.47 9.60L7.21 9.47L7.92 9.22L8.59 8.87L9.19 8.40L9.71 7.84L10.12 7.20L10.42 6.50L10.58 5.74L10.61 4.97L10.49 4.18L10.23 3.42" fill="none" stroke="#cdcdcd" stroke-width="1.25" stroke-linecap="round" stroke-linejoin="round"/></svg>
<div class="a" style="left:469.4px;top:565.90px;width:93.8px;height:16.7px;background:#1c1c1c;"></div>
<div class="a" style="left:476.5px;top:566.00px;width:69px;height:16.6px;overflow:hidden"><div class="t" style="left:0.4px;top:1.04px;font-size:12px;line-height:14px;height:14px;color:#e4e4e4;letter-spacing:0.338px;transform:scaleY(0.925);transform-origin:0 11.16px;">1. Wrist::Arm</div></div>
<svg style="left:549px;top:571.2px;" width="9" height="5.4" viewBox="0 0 9 5.4"><path d="M0 0h9L4.5 5.4z" fill="#dcdcdc"/></svg>
<svg style="left:121px;top:583.8px;" width="14" height="16" viewBox="0 0 14 16"><circle cx="7" cy="8.4" r="4.5" fill="#3a3a3a" stroke="#cfcfcf" stroke-width="1.15"/><path d="M5.3 2.3h4.4M7.5 2.3v1.6M2.4 3.6l1.4 1.4" stroke="#cfcfcf" stroke-width="1.2" fill="none"/></svg>
<div class="t" style="left:142px;top:585.04px;font-size:12px;line-height:14px;height:14px;color:#a8a8a8;letter-spacing:0.038px;transform:scaleY(0.925);transform-origin:0 11.16px;">Rotation</div>
<div class="t" style="left:311px;top:585.04px;font-size:12px;line-height:14px;height:14px;color:#2d9bdc;letter-spacing:0.666px;transform:scaleY(0.925);transform-origin:0 11.16px;">0x+176.0°</div>
<div class="a" style="left:563px;top:531px;width:19.6px;height:52px;background:#2b2b2b;border-radius:0 0 3px 3px"></div>
<div class="a" style="left:563px;top:514px;width:19.6px;height:16.2px;background:#363c43;"></div>
<div class="a" style="left:563px;top:547.6px;width:19.6px;height:1px;background:#1b1b1b;"></div>
<div class="a" style="left:563px;top:565.1px;width:19.6px;height:1px;background:#1b1b1b;"></div>
<div class="a" style="left:567px;top:499.4px;width:1.2px;height:9px;background:#121212;"></div>
<div class="a" style="left:583px;top:457px;width:217px;height:143px;background:#1e1e1e;"></div>
<div class="a" style="left:583px;top:457px;width:2px;height:143px;background:#141414;"></div>
<div class="a" style="left:585px;top:457px;width:215px;height:5.5px;background:#232323;"></div>
<div class="a" style="left:592.5px;top:462.8px;width:207.5px;height:8.4px;background:#646464;"></div>
<div class="a" style="left:584px;top:462.8px;width:6.8px;height:8.4px;background:#2d9bdc;border-radius:4px 0 0 4px"></div>
<div class="a" style="left:586.6px;top:464.4px;width:1.2px;height:5.2px;background:#1a5f8a;"></div>
<div class="a" style="left:585px;top:471.6px;width:215px;height:21px;background:#1d1d1d;"></div>
<div class="a" style="left:585px;top:471.6px;width:215px;height:1px;background:#111;"></div>
<div class="a" style="left:653.00px;top:487px;width:1.3px;height:5.4px;background:#8a8a8a;"></div>
<div class="t" style="left:637.00px;top:473.93px;font-size:10.6px;line-height:13px;height:13px;color:#9e9e9e;letter-spacing:0.522px;transform:scaleY(0.925);transform-origin:0 10.17px;">00:12f</div>
<div class="a" style="left:714.75px;top:487px;width:1.3px;height:5.4px;background:#8a8a8a;"></div>
<div class="t" style="left:698.75px;top:473.93px;font-size:10.6px;line-height:13px;height:13px;color:#9e9e9e;letter-spacing:0.522px;transform:scaleY(0.925);transform-origin:0 10.17px;">01:00f</div>
<div class="a" style="left:776.50px;top:487px;width:1.3px;height:5.4px;background:#8a8a8a;"></div>
<div class="t" style="left:760.50px;top:473.93px;font-size:10.6px;line-height:13px;height:13px;color:#9e9e9e;letter-spacing:0.522px;transform:scaleY(0.925);transform-origin:0 10.17px;">01:12f</div>
<div class="t" style="left:598.8px;top:473.93px;font-size:10.6px;line-height:13px;height:13px;color:#9e9e9e;letter-spacing:0.080px;transform:scaleY(0.925);transform-origin:0 10.17px;">0f</div>
<div class="a" style="left:585px;top:492.6px;width:215px;height:1px;background:#111;"></div>
<div class="a" style="left:592.5px;top:493.6px;width:207.5px;height:15px;background:#4e4e4e;"></div>
<div class="a" style="left:584.6px;top:493.4px;width:5.6px;height:15px;background:#2d9bdc;border-radius:3px 0 0 3px"></div>
<div class="a" style="left:586.6px;top:495.4px;width:1.2px;height:11px;background:#1a5f8a;"></div>
<div class="a" style="left:585px;top:508.6px;width:215px;height:1px;background:#151515;"></div>
<svg style="left:592px;top:509px;" width="208" height="4" viewBox="0 0 208 4"><rect x="0.5" y="0.35" width="207.5" height="3.1" fill="#78cb87"/><rect x="0.5" y="0.35" width="4" height="3.1" fill="#0bc316"/></svg>
<div class="a" style="left:585px;top:512.5px;width:215px;height:1px;background:#151515;"></div>
<div class="a" style="left:592.5px;top:513.6px;width:207.5px;height:16.6px;background:#666;"></div>
<div class="a" style="left:592.5px;top:513.4px;width:207.5px;height:1px;background:#a2a2a2;"></div>
<div class="a" style="left:592.5px;top:523px;width:207.5px;height:7px;background:#707070;"></div>
<svg style="left:592.5px;top:519px;" width="207.5" height="11" viewBox="0 0 207.5 11"><path d="M21 0h1M50 0h1M138 0h1M154 0h1M158 0h1M196 0h1M205 0h1M42 1h1M45 1h1M60 1h1M107 1h1M145 1h1M171 1h1M10 2h1M43 2h1M53 2h1M80 2h1M97 2h1M137 2h1M74 3h1M174 3h1M192 3h1M1 4h1M3 4h1M6 4h1M8 4h1M9 4h1M10 4h1M11 4h1M14 4h1M16 4h1M17 4h1M22 4h1M23 4h1M25 4h1M28 4h1M31 4h1M33 4h1M34 4h1M36 4h1M37 4h1M38 4h1M40 4h1M41 4h1M43 4h1M47 4h1M49 4h1M50 4h1M51 4h1M54 4h1M55 4h1M58 4h1M59 4h1M60 4h1M61 4h1M62 4h1M63 4h1M65 4h1M70 4h1M71 4h1M72 4h1M73 4h1M74 4h1M80 4h1M81 4h1M82 4h1M84 4h1M85 4h1M90 4h1M94 4h1M96 4h1M102 4h1M105 4h1M106 4h1M107 4h1M110 4h1M112 4h1M114 4h1M116 4h1M121 4h1M126 4h1M128 4h1M130 4h1M133 4h1M135 4h1M136 4h1M137 4h1M141 4h1M144 4h1M147 4h1M148 4h1M150 4h1M151 4h1M153 4h1M155 4h1M157 4h1M159 4h1M161 4h1M165 4h1M174 4h1M175 4h1M180 4h1M182 4h1M183 4h1M189 4h1M191 4h1M192 4h1M193 4h1M195 4h1M196 4h1M199 4h1M200 4h1M201 4h1M202 4h1M203 4h1M0 5h1M2 5h1M6 5h1M8 5h1M11 5h1M12 5h1M13 5h1M14 5h1M15 5h1M18 5h1M19 5h1M21 5h1M22 5h1M24 5h1M29 5h1M30 5h1M33 5h1M35 5h1M37 5h1M40 5h1M42 5h1M44 5h1M45 5h1M47 5h1M51 5h1M54 5h1M55 5h1M56 5h1M57 5h1M59 5h1M60 5h1M61 5h1M64 5h1M68 5h1M69 5h1M72 5h1M74 5h1M76 5h1M79 5h1M81 5h1M82 5h1M84 5h1M85 5h1M87 5h1M88 5h1M90 5h1M93 5h1M96 5h1M99 5h1M102 5h1M111 5h1M113 5h1M115 5h1M116 5h1M120 5h1M122 5h1M125 5h1M130 5h1M131 5h1M132 5h1M134 5h1M135 5h1M136 5h1M138 5h1M143 5h1M144 5h1M145 5h1M146 5h1M147 5h1M150 5h1M152 5h1M154 5h1M155 5h1M156 5h1M160 5h1M161 5h1M162 5h1M163 5h1M165 5h1M169 5h1M172 5h1M173 5h1M175 5h1M176 5h1M177 5h1M178 5h1M179 5h1M180 5h1M184 5h1M185 5h1M187 5h1M190 5h1M191 5h1M194 5h1M195 5h1M197 5h1M198 5h1M204 5h1M206 5h1M0 6h1M2 6h1M4 6h1M5 6h1M6 6h1M13 6h1M15 6h1M18 6h1M19 6h1M20 6h1M21 6h1M25 6h1M27 6h1M33 6h1M36 6h1M41 6h1M43 6h1M44 6h1M45 6h1M47 6h1M51 6h1M53 6h1M56 6h1M57 6h1M58 6h1M63 6h1M64 6h1M66 6h1M67 6h1M68 6h1M73 6h1M76 6h1M81 6h1M83 6h1M86 6h1M90 6h1M91 6h1M94 6h1M96 6h1M97 6h1M100 6h1M105 6h1M108 6h1M110 6h1M115 6h1M116 6h1M120 6h1M122 6h1M134 6h1M139 6h1M140 6h1M145 6h1M146 6h1M147 6h1M149 6h1M150 6h1M153 6h1M170 6h1M175 6h1M178 6h1M179 6h1M181 6h1M183 6h1M184 6h1M185 6h1M186 6h1M188 6h1M192 6h1M195 6h1M196 6h1M201 6h1M6 7h1M9 7h1M10 7h1M11 7h1M15 7h1M22 7h1M24 7h1M25 7h1M26 7h1M29 7h1M31 7h1M38 7h1M47 7h1M48 7h1M49 7h1M51 7h1M53 7h1M55 7h1M57 7h1M59 7h1M60 7h1M63 7h1M64 7h1M65 7h1M68 7h1M69 7h1M72 7h1M78 7h1M82 7h1M89 7h1M90 7h1M91 7h1M92 7h1M93 7h1M98 7h1M99 7h1M101 7h1M111 7h1M115 7h1M117 7h1M119 7h1M127 7h1M130 7h1M133 7h1M137 7h1M138 7h1M139 7h1M142 7h1M148 7h1M152 7h1M156 7h1M159 7h1M160 7h1M164 7h1M167 7h1M171 7h1M178 7h1M185 7h1M189 7h1M195 7h1M204 7h1M207 7h1M7 8h1M10 8h1M15 8h1M16 8h1M18 8h1M22 8h1M29 8h1M31 8h1M32 8h1M36 8h1M37 8h1M42 8h1M44 8h1M48 8h1M51 8h1M55 8h1M58 8h1M59 8h1M62 8h1M63 8h1M67 8h1M74 8h1M84 8h1M86 8h1M88 8h1M97 8h1M99 8h1M102 8h1M105 8h1M107 8h1M109 8h1M116 8h1M118 8h1M126 8h1M142 8h1M146 8h1M148 8h1M150 8h1M153 8h1M154 8h1M158 8h1M162 8h1M164 8h1M168 8h1M172 8h1M176 8h1M178 8h1M179 8h1M181 8h1M183 8h1M185 8h1M186 8h1M191 8h1M193 8h1M201 8h1M202 8h1M206 8h1M0 9h1M1 9h1M6 9h1M8 9h1M9 9h1M10 9h1M21 9h1M23 9h1M30 9h1M32 9h1M36 9h1M37 9h1M41 9h1M44 9h1M47 9h1M60 9h1M61 9h1M62 9h1M63 9h1M68 9h1M70 9h1M78 9h1M80 9h1M85 9h1M89 9h1M95 9h1M102 9h1M105 9h1M106 9h1M110 9h1M111 9h1M116 9h1M120 9h1M123 9h1M132 9h1M134 9h1M136 9h1M138 9h1M151 9h1M152 9h1M155 9h1M156 9h1M167 9h1M169 9h1M172 9h1M177 9h1M181 9h1M183 9h1M184 9h1M187 9h1M196 9h1M199 9h1M200 9h1M201 9h1M203 9h1M204 9h1M205 9h1M206 9h1M0 10h1M1 10h1M2 10h1M5 10h1M15 10h1M16 10h1M20 10h1M28 10h1M30 10h1M33 10h1M35 10h1M37 10h1M41 10h1M43 10h1M44 10h1M51 10h1M53 10h1M57 10h1M61 10h1M66 10h1M76 10h1M83 10h1M86 10h1M87 10h1M90 10h1M91 10h1M98 10h1M99 10h1M106 10h1M108 10h1M114 10h1M116 10h1M117 10h1M118 10h1M122 10h1M124 10h1M126 10h1M128 10h1M129 10h1M136 10h1M138 10h1M139 10h1M147 10h1M153 10h1M158 10h1M161 10h1M163 10h1M164 10h1M170 10h1M173 10h1M174 10h1M181 10h1M182 10h1M184 10h1M185 10h1M187 10h1M189 10h1M190 10h1M197 10h1M198 10h1M199 10h1M204 10h1M207 10h1" stroke="#5b5b5b" stroke-width="1" shape-rendering="crispEdges" transform="translate(0.5,0.5)"/></svg>
<div class="a" style="left:592.5px;top:530.8px;width:207.5px;height:16.2px;background:#525252;"></div>
<div class="a" style="left:592.5px;top:548.8px;width:207.5px;height:16.2px;background:#8c4a7f;"></div>
<div class="a" style="left:592.5px;top:566.3px;width:207.5px;height:16.2px;background:#345880;"></div>
<div class="a" style="left:585px;top:583px;width:215px;height:17px;background:#262626;"></div>
<div class="a" style="left:584.6px;top:514px;width:6px;height:16.2px;background:#363c43;"></div>
<svg style="left:585px;top:477px;" width="12.6" height="14.4" viewBox="0 0 12.6 14.4"><path d="M0.3 0.3h12v6.2L6.3 14L0.3 6.5z" fill="#2d9bdc"/><path d="M4.4 3v2M8.2 3v2M4.6 7c1 1 2.4 1 3.4 0" stroke="#134a6e" stroke-width="0.9" fill="none"/></svg>
<div class="a" style="left:590.75px;top:484px;width:1.5px;height:116px;background:#e8121c;"></div>
<div class="a" style="left:590.9px;top:462.8px;width:1.4px;height:8.4px;background:#e8121c;"></div>
<svg style="left:588px;top:587px;" width="7" height="11.4" viewBox="0 0 7 11.4"><path d="M0.4 0.6h2.4M4.2 0.6h2.4M0.4 10.8h2.4M4.2 10.8h2.4M3.5 0.8v10" stroke="#d8d8d8" stroke-width="1.2" fill="none"/></svg>
</div>
</body>
</html>
